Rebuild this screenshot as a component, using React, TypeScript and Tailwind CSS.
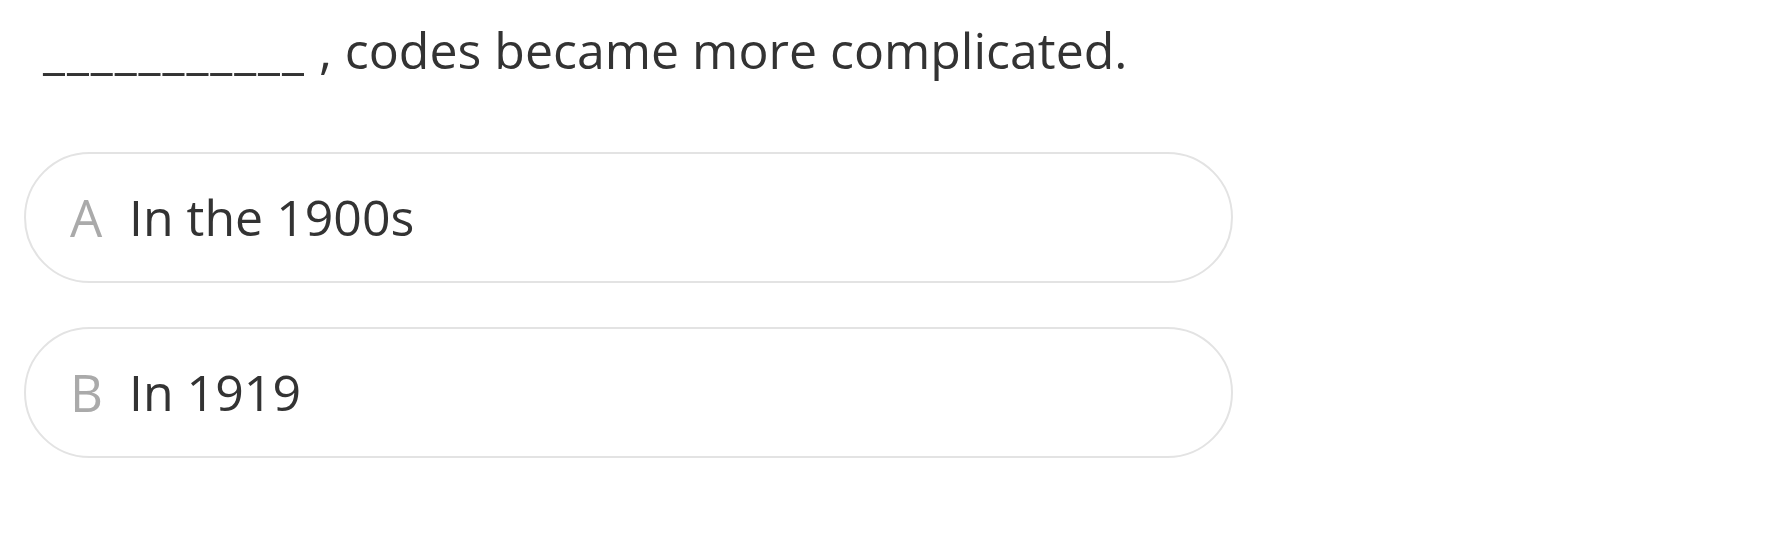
export default function App() {
  return (
    <div className="w-[1774px] h-[549px] bg-white pt-[14px] pl-[24px]" style={{ fontFamily: '"Open Sans", "Noto Sans", sans-serif' }}>
      <div className="pl-[19px] text-[50px] leading-[72px] text-[#333333] whitespace-pre">
        <span className="tracking-[2px]">___________</span> , codes became more complicated.
      </div>
      <div className="mt-[66px] flex flex-col gap-[44px]">
        {[
          ["A", "In the 1900s"],
          ["B", "In 1919"],
        ].map(([l, t]) => (
          <div key={l} className="w-[1209px] h-[131px] rounded-full border-2 border-[#e3e3e3] flex items-center pl-[44px]">
            <span className="text-[51px] text-[#aaaaaa] w-[59px]">{l}</span>
            <span className="text-[50px] text-[#333333]">{t}</span>
          </div>
        ))}
      </div>
    </div>
  );
}
